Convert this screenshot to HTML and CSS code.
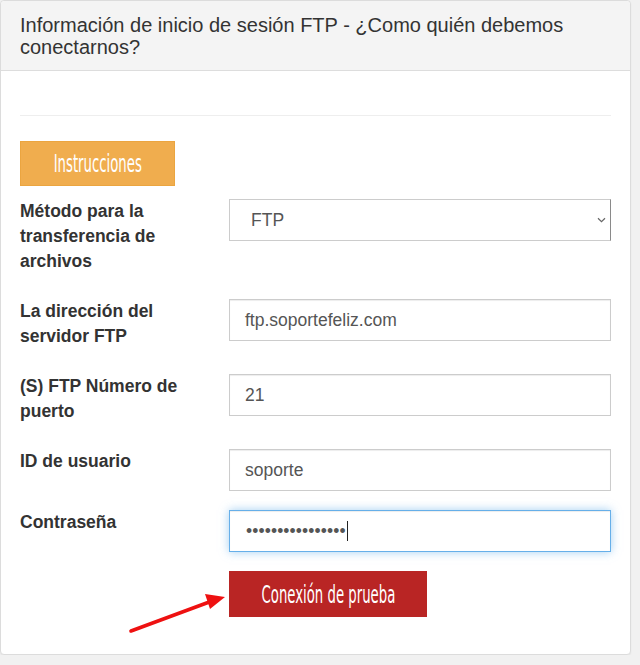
FILE: index.html
```html
<!DOCTYPE html>
<html lang="es">
<head>
<meta charset="utf-8">
<title>FTP</title>
<link rel="stylesheet" href="styles.css">
</head>
<body>
<div class="card">
  <div class="card-head">
    <h3 class="card-title">Información de inicio de sesión FTP - ¿Como quién debemos conectarnos?</h3>
  </div>
  <div class="card-body">
    <hr class="sep">
    <div class="btn btn-warn"><span class="btn-text">Instrucciones</span></div>
    <div class="form">
      <div class="row">
        <div class="label">Método para la transferencia de archivos</div>
        <div class="field select">
          <span>FTP</span>
          <svg class="chev" width="9" height="6" viewBox="0 0 9 6"><path d="M1 1.2 L4.5 4.6 L8 1.2" fill="none" stroke="#666" stroke-width="1.2"/></svg>
        </div>
      </div>
      <div class="row">
        <div class="label">La dirección del servidor FTP</div>
        <div class="field">ftp.soportefeliz.com</div>
      </div>
      <div class="row">
        <div class="label">(S) FTP Número de puerto</div>
        <div class="field">21</div>
      </div>
      <div class="row">
        <div class="label">ID de usuario</div>
        <div class="field">soporte</div>
      </div>
      <div class="row">
        <div class="label">Contraseña</div>
        <div class="field focus"><span class="dots">••••••••••••••••</span><span class="caret"></span></div>
      </div>
      <div class="row">
        <div></div>
        <div class="btn btn-red"><span class="btn-text">Conexión de prueba</span></div>
      </div>
    </div>
  </div>
  <svg class="arrow" width="640" height="665" viewBox="0 0 640 665">
    <line x1="131" y1="631" x2="212" y2="601" stroke="#ee1111" stroke-width="3.6" stroke-linecap="round"/>
    <polygon points="225,597 205,594 210,609" fill="#ee1111"/>
  </svg>
</div>
</body>
</html>
```
FILE: styles.css
```css
html, body {
  margin: 0;
  padding: 0;
  background: #f1f1f1;
  font-family: "Liberation Sans", Arial, sans-serif;
  color: #333;
}

.card {
  position: relative;
  box-sizing: border-box;
  width: 631px;
  background: #fff;
  border: 1px solid #dcdcdc;
  border-radius: 4px;
  box-shadow: 0 1px 2px rgba(0, 0, 0, 0.06);
}

.card-head {
  background: #f4f4f4;
  border-bottom: 1px solid #dddddd;
  border-radius: 4px 4px 0 0;
  padding: 12.5px 19px 12.5px 19px;
}

.card-title {
  margin: 0;
  font-size: 20px;
  line-height: 22px;
  font-weight: normal;
  color: #333;
}

.card-body {
  padding: 19px 19px 37px 19px;
}

.sep {
  margin: 25px 0 25px 0;
  border: 0;
  border-top: 1px solid #eeeeee;
  height: 0;
}

.btn {
  box-sizing: border-box;
  display: flex;
  align-items: center;
  justify-content: center;
  color: #fff;
  overflow: hidden;
}

.btn-text {
  display: inline-block;
  font-family: "DejaVu Sans Condensed", "DejaVu Sans", sans-serif;
  font-stretch: condensed;
  font-size: 25px;
  line-height: 25px;
  white-space: nowrap;
  transform: scaleX(0.59);
  transform-origin: center;
}

.btn-warn {
  width: 155px;
  height: 45px;
  background: #f0ad4e;
  border: 1px solid #eba540;
  margin-bottom: 13px;
}

.btn-red {
  width: 198px;
  height: 46px;
  background: #b92524;
}

.form {
  display: flex;
  flex-direction: column;
}

.row {
  display: grid;
  grid-template-columns: 180px 1fr;
  column-gap: 29px;
  align-items: start;
  margin-bottom: 19px;
}

.row:last-child {
  margin-bottom: 0;
}

.label {
  font-weight: bold;
  font-size: 17.5px;
  line-height: 25px;
  color: #333;
  padding-bottom: 6px;
}

.field {
  box-sizing: border-box;
  height: 42px;
  border: 1px solid #cccccc;
  box-shadow: inset 0 1px 1px rgba(0, 0, 0, 0.075);
  padding: 0 15px;
  display: flex;
  align-items: center;
  font-size: 17.5px;
  color: #555;
  background: #fff;
}

.select {
  padding-left: 21px;
  justify-content: space-between;
  border-right-color: #8a8a8a;
  padding-right: 4px;
  box-shadow: none;
}

.chev {
  display: block;
}

.focus {
  border-color: #66afe9;
  box-shadow: inset 0 1px 1px rgba(0, 0, 0, 0.075), 0 0 9px rgba(102, 175, 233, 0.6);
  padding-left: 16px;
}

.dots {
  font-size: 17.5px;
  letter-spacing: 0.1px;
  color: #555;
}

.caret {
  display: inline-block;
  width: 1px;
  height: 20px;
  background: #222;
  margin-left: 1px;
}

.arrow {
  position: absolute;
  left: -1px;
  top: -1px;
  pointer-events: none;
}
```
